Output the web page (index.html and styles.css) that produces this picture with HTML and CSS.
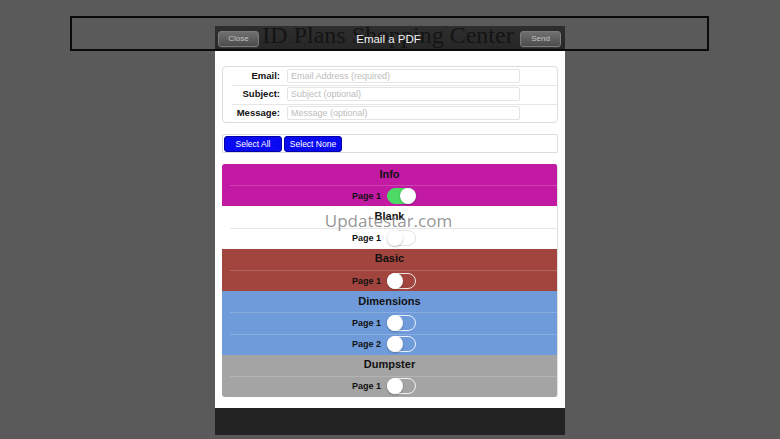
FILE: index.html
```html
<!DOCTYPE html>
<html>
<head>
<meta charset="utf-8">
<title>Email a PDF</title>
<link rel="stylesheet" href="styles.css">
</head>
<body>
<div class="banner"><span class="banner-title">ID Plans Shopping Center</span></div>

<div class="modal">
  <div class="modal-head">
    <span class="hbtn">Close</span>
    <span class="modal-title">Email a PDF</span>
    <span class="hbtn">Send</span>
  </div>
  <div class="modal-body">
    <div class="form">
      <div class="frow"><label>Email:</label><input type="text" placeholder="Email Address (required)"></div>
      <div class="frow sep"><label>Subject:</label><input type="text" placeholder="Subject (optional)"></div>
      <div class="frow sep"><label>Message:</label><input type="text" placeholder="Message (optional)"></div>
    </div>
    <div class="select-bar">
      <span class="sbtn">Select All</span>
      <span class="sbtn">Select None</span>
    </div>
    <div class="sections">
      <div class="section info">
        <div class="shead">Info</div>
        <div class="srow"><span class="plabel">Page 1</span><span class="toggle on"><i></i></span></div>
      </div>
      <div class="section blank">
        <div class="shead">Blank</div>
        <div class="srow"><span class="plabel">Page 1</span><span class="toggle"><i></i></span></div>
      </div>
      <div class="section basic">
        <div class="shead">Basic</div>
        <div class="srow"><span class="plabel">Page 1</span><span class="toggle"><i></i></span></div>
      </div>
      <div class="section dims">
        <div class="shead">Dimensions</div>
        <div class="srow"><span class="plabel">Page 1</span><span class="toggle"><i></i></span></div>
        <div class="srow"><span class="plabel">Page 2</span><span class="toggle"><i></i></span></div>
      </div>
      <div class="section dump">
        <div class="shead">Dumpster</div>
        <div class="srow"><span class="plabel">Page 1</span><span class="toggle"><i></i></span></div>
      </div>
    </div>
  </div>
  <div class="modal-foot"></div>
</div>

<div class="watermark">Updatestar.com</div>
</body>
</html>
```

FILE: styles.css
```css
html, body {
  margin: 0;
  padding: 0;
}
body {
  width: 780px;
  height: 439px;
  background: #5a5a5a;
  position: relative;
  overflow: hidden;
  font-family: "Liberation Sans", Arial, sans-serif;
}

.banner {
  position: absolute;
  left: 70px;
  top: 16px;
  width: 635px;
  height: 31px;
  border: 2px solid #0a0a0a;
  z-index: 1;
  display: flex;
  align-items: center;
  justify-content: center;
  pointer-events: none;
}
.banner-title {
  font-family: "Liberation Serif", "Times New Roman", serif;
  font-size: 24px;
  line-height: 24px;
  color: #141414;
  margin-top: 2px;
  margin-left: -3px;
}

.modal {
  position: absolute;
  left: 215px;
  top: 26px;
  width: 350px;
  display: flex;
  flex-direction: column;
}
.modal-head {
  height: 25px;
  background: linear-gradient(#2e2e2e, #262626);
  display: flex;
  align-items: center;
  justify-content: space-between;
  padding: 0 4px 0 3px;
}
.hbtn {
  position: relative;
  z-index: 2;
  width: 39px;
  height: 14px;
  border: 1px solid #7c7c7c;
  border-radius: 3px;
  background: linear-gradient(#707070, #4c4c4c);
  color: #c4c4c4;
  font-size: 8px;
  line-height: 14px;
  text-align: center;
  box-shadow: 0 1px 0 rgba(255,255,255,0.08);
}
.modal-title {
  position: relative;
  z-index: 2;
  color: #f2f2f2;
  font-size: 11.5px;
  margin-left: -2px;
}
.modal-body {
  box-sizing: border-box;
  background: #ffffff;
  height: 357px;
  padding: 15px 7px 0 7px;
  display: flex;
  flex-direction: column;
}
.modal-foot {
  height: 27px;
  background: #232323;
}

.form {
  border: 1px solid #dcdcdc;
  border-radius: 4px;
  height: 55px;
  display: flex;
  flex-direction: column;
}
.frow {
  height: 19px;
  display: grid;
  grid-template-columns: 64px 233px;
  align-items: center;
  position: relative;
}
.frow.sep::before {
  content: "";
  position: absolute;
  left: 9px;
  right: 0;
  top: 0;
  height: 1px;
  background: #e6e6e6;
}
.frow label {
  text-align: right;
  padding-right: 7px;
  font-size: 9.5px;
  font-weight: bold;
  color: #111;
  margin-top: -1px;
}
.frow input {
  box-sizing: border-box;
  height: 14px;
  width: 233px;
  margin: 0;
  padding: 0 3px;
  border: 1px solid #e4e4e4;
  border-radius: 2px;
  font-family: "Liberation Sans", Arial, sans-serif;
  font-size: 9px;
  outline: none;
  background: #fff;
}
.frow input::placeholder {
  color: #bcbcbc;
}

.select-bar {
  margin-top: 11px;
  height: 17px;
  border: 1px solid #dcdcdc;
  border-radius: 2px;
  display: flex;
  align-items: center;
  gap: 2px;
  padding-left: 1px;
}
.sbtn {
  height: 14px;
  width: 56px;
  border: 1px solid #0000a8;
  border-radius: 3px;
  background: #0a0af2;
  color: #ffffff;
  font-size: 8.5px;
  line-height: 14px;
  text-align: center;
}

.sections {
  margin-top: 11px;
  border-radius: 3px;
  overflow: hidden;
  border-right: 1px solid #e0e0e0;
}
.section {
  display: flex;
  flex-direction: column;
}
.shead, .srow {
  height: 21.2px;
  position: relative;
}
.shead {
  box-sizing: border-box;
  display: flex;
  align-items: center;
  justify-content: center;
  padding-bottom: 2px;
  font-size: 11px;
  font-weight: bold;
  color: #111;
}
.srow {
  display: grid;
  grid-template-columns: 165px auto;
  align-items: center;
}
.srow::before {
  content: "";
  position: absolute;
  left: 8px;
  right: 0;
  top: 0;
  height: 1px;
  background: rgba(255,255,255,0.18);
}
.plabel {
  text-align: right;
  padding-right: 6px;
  font-size: 9px;
  font-weight: bold;
  color: #111;
}

.info { background: #c31aa4; }
.blank { background: #ffffff; }
.blank .srow::before { background: #e6e6e6; }
.basic { background: #a2453f; }
.dims { background: #6f9bda; }
.dump { background: #a4a4a4; }

.toggle {
  box-sizing: border-box;
  width: 29px;
  height: 16px;
  border-radius: 8px;
  border: 1px solid rgba(255,255,255,0.85);
  position: relative;
  display: block;
}
.toggle i {
  position: absolute;
  left: -1px;
  top: -1px;
  width: 16px;
  height: 16px;
  border-radius: 50%;
  background: #ffffff;
  box-shadow: 0 1px 2px rgba(0,0,0,0.25);
}
.toggle.on {
  background: #4cd964;
  border-color: #4cd964;
}
.toggle.on i {
  left: auto;
  right: -1px;
}
.blank .toggle {
  border-color: #e2e2e2;
}

.watermark {
  position: absolute;
  left: 0;
  width: 780px;
  top: 209px;
  text-align: center;
  font-family: "Open Sans", "DejaVu Sans", sans-serif;
  font-size: 17px;
  color: rgba(130,130,130,0.85);
  z-index: 4;
  pointer-events: none;
  padding-right: 3px;
  box-sizing: border-box;
}
```
